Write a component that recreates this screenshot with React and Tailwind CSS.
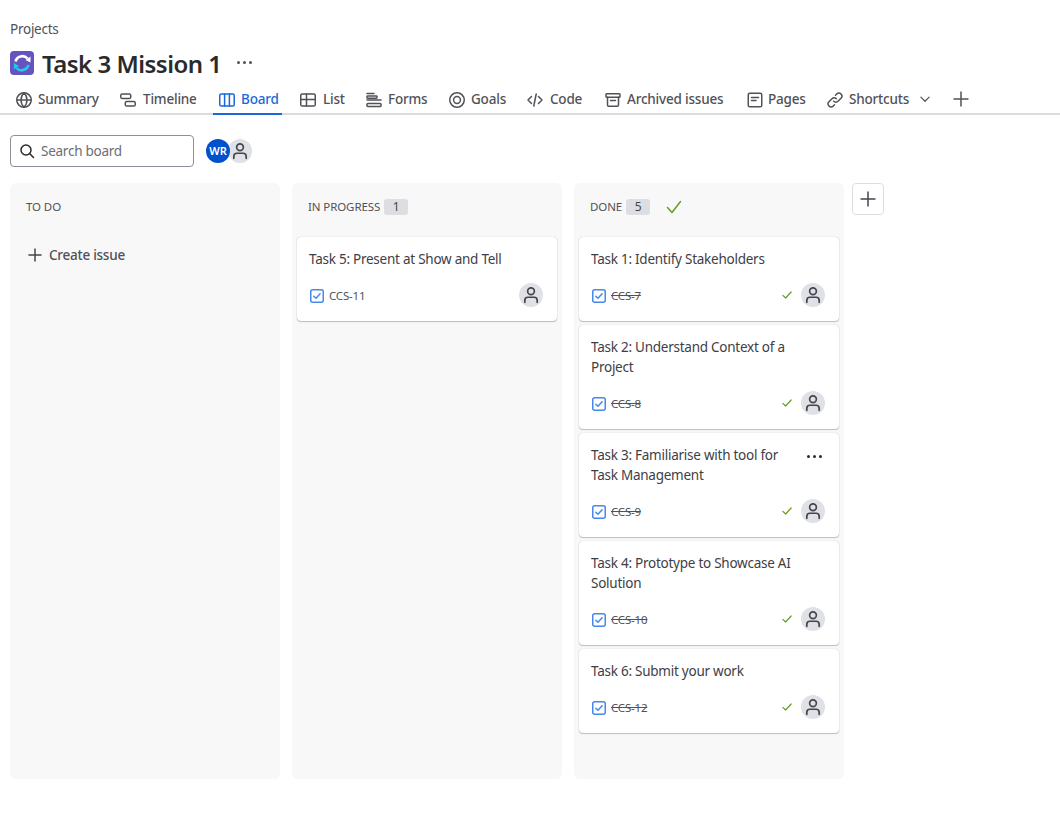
import React from 'react';

const Ico = ({ children, className = 'w-4 h-4' }) => (
  <svg viewBox="0 0 16 16" fill="none" stroke="currentColor" strokeWidth="1.5" strokeLinecap="round" strokeLinejoin="round" className={`${className} shrink-0`}>
    {children}
  </svg>
);

const GlobeIcon = () => (
  <Ico>
    <circle cx="8" cy="8" r="7.25" />
    <path d="M.75 8h14.5M8 .75C5.8 3 5 5.5 5 8s.8 5 3 7.25C10.2 13 11 10.5 11 8s-.8-5-3-7.25Z" />
  </Ico>
);
const TimelineIcon = () => (
  <Ico>
    <rect x=".75" y="2" width="10" height="4.5" rx="1.6" />
    <rect x="5.25" y="9.5" width="10" height="4.5" rx="1.6" />
  </Ico>
);
const BoardIcon = () => (
  <Ico>
    <rect x=".75" y="2" width="14.5" height="12" rx="1.6" />
    <path d="M5.6 2v12M10.4 2v12" />
  </Ico>
);
const ListIcon = () => (
  <Ico>
    <rect x=".75" y="2" width="14.5" height="12" rx="1.6" />
    <path d="M.75 7.5h14.5M6.5 2v12" />
  </Ico>
);
const FormsIcon = () => (
  <Ico>
    <path d="M1 1.5h7M1 8h14" />
    <rect x="1" y="4" width="10" height="2.2" rx=".6" />
    <rect x="1" y="11.5" width="14" height="3" rx=".8" />
  </Ico>
);
const GoalsIcon = () => (
  <Ico>
    <circle cx="8" cy="8" r="7.25" />
    <circle cx="8" cy="8" r="3.4" />
  </Ico>
);
const CodeIcon = () => (
  <Ico className="w-[18px] h-4">
    <path d="M4.5 4.5 1 8l3.5 3.5M11.5 4.5 15 8l-3.5 3.5M9.2 2 6.8 14" />
  </Ico>
);
const ArchiveIcon = () => (
  <Ico>
    <rect x="1" y="1.75" width="14" height="3.5" rx=".8" />
    <path d="M2.5 5.25V13c0 .7.5 1.25 1.2 1.25h8.6c.7 0 1.2-.55 1.2-1.25V5.25M5.5 8.5h5" />
  </Ico>
);
const PagesIcon = () => (
  <Ico>
    <rect x="1.25" y="1.25" width="13.5" height="13.5" rx="1.6" />
    <path d="M4.5 5.5h7M4.5 8.5h4.5" />
  </Ico>
);
const LinkIcon = () => (
  <Ico>
    <path d="M6.7 9.3a3 3 0 0 0 4.3 0l3-3a3 3 0 0 0-4.3-4.3l-1.2 1.2" />
    <path d="M9.3 6.7a3 3 0 0 0-4.3 0l-3 3A3 3 0 0 0 6.3 14l1.2-1.2" />
  </Ico>
);

const tabs = [
  { label: 'Summary', icon: GlobeIcon, text: 'w-[61px]', gap: 'ml-0', inner: 'gap-1.5' },
  { label: 'Timeline', icon: TimelineIcon, text: 'w-[54px]', gap: 'ml-[15px]', inner: 'gap-[7px]' },
  { label: 'Board', icon: BoardIcon, text: 'w-[37px]', gap: 'ml-4', inner: 'gap-1.5', active: true },
  { label: 'List', icon: ListIcon, text: 'w-[21px]', gap: 'ml-3', inner: 'gap-[7px]' },
  { label: 'Forms', icon: FormsIcon, text: 'w-[39px]', gap: 'ml-4', inner: 'gap-1.5' },
  { label: 'Goals', icon: GoalsIcon, text: 'w-[35px]', gap: 'ml-4', inner: 'gap-1.5' },
  { label: 'Code', icon: CodeIcon, text: 'w-[33px]', gap: 'ml-[14px]', inner: 'gap-1.5' },
  { label: 'Archived issues', icon: ArchiveIcon, text: 'w-[97px]', gap: 'ml-4', inner: 'gap-1.5' },
  { label: 'Pages', icon: PagesIcon, text: 'w-[37px]', gap: 'ml-[17px]', inner: 'gap-[5px]' },
  { label: 'Shortcuts', icon: LinkIcon, text: 'w-[61px]', gap: 'ml-4', inner: 'gap-1.5' },
];

const PersonAvatar = ({ className = '' }) => (
  <div className={`w-6 h-6 rounded-full bg-[#dfe1e6] flex items-center justify-center text-[#44464c] ${className}`}>
    <svg viewBox="0 0 16 16" fill="none" stroke="currentColor" strokeWidth="1.5" className="w-[18px] h-[18px]">
      <circle cx="8" cy="4.6" r="3" />
      <path d="M2.5 14.5v-1.6c0-1.6 1.2-2.9 2.8-2.9h5.4c1.6 0 2.8 1.3 2.8 2.9v1.6" strokeLinecap="round" />
    </svg>
  </div>
);

const TaskIcon = () => (
  <svg viewBox="0 0 16 16" fill="none" className="w-4 h-4 shrink-0 mt-0.5">
    <rect x="1.75" y="1.75" width="12.5" height="12.5" rx="2" stroke="#4688ec" strokeWidth="1.5" />
    <path d="M4.8 8.2 7 10.3 11.1 5.7" stroke="#4688ec" strokeWidth="1.5" strokeLinecap="round" strokeLinejoin="round" />
  </svg>
);

const Card = ({ title, code, done, menu }) => (
  <div className="bg-white rounded-[4px] shadow-[0_1px_1px_rgba(30,31,33,0.25),0_0_1px_rgba(30,31,33,0.31)] pt-3 pl-3 pr-3.5 pb-3.5">
    <div className="flex justify-between">
      <p className="text-[13.5px] tracking-[-0.25px] leading-5 text-[#3e4046] w-[212px]">{title}</p>
      {menu && (
        <div className="flex gap-[3px] mt-[10px] mr-[3px] h-[3px]">
          <span className="w-[3px] h-[3px] rounded-full bg-[#292a2e]" />
          <span className="w-[3px] h-[3px] rounded-full bg-[#292a2e]" />
          <span className="w-[3px] h-[3px] rounded-full bg-[#292a2e]" />
        </div>
      )}
    </div>
    <div className="flex items-center mt-3.5 h-6">
      <TaskIcon />
      <span className={`ml-1 mt-px text-[11.5px] tracking-[-0.2px] text-[#505258] ${done ? 'line-through' : ''}`}>{code}</span>
      <div className="ml-auto flex items-center">
        {done && (
          <svg viewBox="0 0 16 16" fill="none" className="w-3 h-3 mr-2">
            <path d="M2.5 8.5 6.2 12l7.3-8" stroke="#6a9a23" strokeWidth="1.6" strokeLinecap="round" strokeLinejoin="round" />
          </svg>
        )}
        <PersonAvatar />
      </div>
    </div>
  </div>
);

const Column = ({ name, count, done, children }) => (
  <div className="w-[270px] h-[596px] bg-[#f8f8f8] rounded-md px-[5px] shrink-0">
    <div className="h-[54px] flex items-center pl-[11px] pb-[6px] text-[11.5px] tracking-[-0.1px] text-[#505258]">
      <span>{name}</span>
      {count && (
        <span className="ml-1 w-6 h-4 rounded-[3px] bg-[#dddee1] flex items-center justify-center text-[12px] text-[#44464c]">{count}</span>
      )}
      {done && (
        <svg viewBox="0 0 16 16" fill="none" className="w-4 h-4 ml-4">
          <path d="M1.5 8.5 6 13.5l8.5-11" stroke="#6a9a23" strokeWidth="1.5" strokeLinecap="round" strokeLinejoin="round" />
        </svg>
      )}
    </div>
    <div className="flex flex-col gap-1">{children}</div>
  </div>
);

const App = () => {
  return (
    <div className="w-[1060px] h-[833px] bg-white overflow-hidden font-['Noto_Sans',sans-serif]">
      <div className="pl-2.5 pt-[19px]">
        <p className="text-[13.5px] tracking-[-0.25px] leading-5 text-[#505258]">Projects</p>
        <div className="flex items-center mt-[12px] h-6">
          <svg viewBox="0 0 24 24" className="w-6 h-6 shrink-0">
            <rect width="24" height="24" rx="4" fill="#6554c0" />
            <path d="M5.5 10.5a7 7 0 0 1 12-3" fill="none" stroke="#fff" strokeWidth="2.6" />
            <path d="M20.5 5.5v6l-5-2.5z" fill="#fff" />
            <path d="M18.5 14a7 7 0 0 1-12 3" fill="none" stroke="#29c6e8" strokeWidth="2.6" />
            <path d="M3.8 18.5v-6.5l5.2 3z" fill="#29c6e8" />
          </svg>
          <h1 className="ml-2 mt-0.5 text-[24px] tracking-[-0.5px] leading-7 font-semibold text-[#292a2e]">Task 3 Mission 1</h1>
          <div className="ml-[15px] flex gap-[3px] mb-0.5">
            <span className="w-[3px] h-[3px] rounded-full bg-[#505258]" />
            <span className="w-[3px] h-[3px] rounded-full bg-[#505258]" />
            <span className="w-[3px] h-[3px] rounded-full bg-[#505258]" />
          </div>
        </div>
      </div>

      {/* Tabs */}
      <div className="mt-[11px] h-[29px] border-b-2 border-[#dcdcdc] flex items-start text-[#505258] pl-2.5">
        {tabs.map((tab) => {
          const Icon = tab.icon;
          return (
            <div
              key={tab.label}
              className={`h-[29px] flex items-center pl-1.5 ${tab.inner} ${tab.gap} ${tab.active ? 'text-[#1868db] border-b-2 border-[#1868db] pr-1' : 'pb-0.5'}`}
            >
              <Icon />
              <span className={`text-[13.5px] tracking-[-0.2px] font-medium whitespace-nowrap ${tab.text}`}>{tab.label}</span>
            </div>
          );
        })}
        <svg viewBox="0 0 16 16" fill="none" className="w-3 h-3 ml-[9px] mt-[7px] shrink-0">
          <path d="M2.5 5.5 8 11l5.5-5.5" stroke="currentColor" strokeWidth="1.6" strokeLinecap="round" strokeLinejoin="round" />
        </svg>
        <svg viewBox="0 0 16 16" fill="none" className="w-4 h-4 ml-[22px] mt-[5px] shrink-0">
          <path d="M8 .5v15M.5 8h15" stroke="currentColor" strokeWidth="1.5" />
        </svg>
      </div>

      {/* Filters */}
      <div className="flex items-center pl-2.5 mt-5">
        <div className="w-[184px] h-8 border border-[#8c8f97] rounded-[4px] flex items-center pl-2">
          <svg viewBox="0 0 16 16" fill="none" className="w-4 h-4 text-[#292a2e]">
            <circle cx="7" cy="7" r="5" stroke="currentColor" strokeWidth="1.5" />
            <path d="m10.8 10.8 3.7 3.7" stroke="currentColor" strokeWidth="1.5" strokeLinecap="round" />
          </svg>
          <span className="ml-1.5 text-[13.5px] tracking-[-0.25px] text-[#6b6e76]">Search board</span>
        </div>
        <div className="flex ml-3">
          <div className="w-6 h-6 rounded-full bg-[#0052cc] text-white text-[11px] font-semibold flex items-center justify-center relative z-10">WR</div>
          <PersonAvatar className="-ml-0.5" />
        </div>
      </div>

      {/* Board */}
      <div className="flex gap-3 pl-2.5 mt-4">
        <Column name="TO DO">
          <div className="flex items-center pl-[13px] mt-1.5 h-6 text-[#505258]">
            <svg viewBox="0 0 16 16" fill="none" className="w-3.5 h-3.5">
              <path d="M8 .5v15M.5 8h15" stroke="#44464c" strokeWidth="1.7" />
            </svg>
            <span className="ml-[7px] text-[13.5px] tracking-[-0.25px] font-medium">Create issue</span>
          </div>
        </Column>
        <Column name="IN PROGRESS" count="1">
          <Card title="Task 5: Present at Show and Tell" code="CCS-11" />
        </Column>
        <Column name="DONE" count="5" done>
          <Card title="Task 1: Identify Stakeholders" code="CCS-7" done />
          <Card title="Task 2: Understand Context of a Project" code="CCS-8" done />
          <Card title="Task 3: Familiarise with tool for Task Management" code="CCS-9" done menu />
          <Card title="Task 4: Prototype to Showcase AI Solution" code="CCS-10" done />
          <Card title="Task 6: Submit your work" code="CCS-12" done />
        </Column>
        <div className="-ml-1 w-8 h-8 rounded-[4px] border border-[#dddee1] flex items-center justify-center shrink-0">
          <svg viewBox="0 0 16 16" fill="none" className="w-4 h-4">
            <path d="M8 .5v15M.5 8h15" stroke="#44464c" strokeWidth="1.5" />
          </svg>
        </div>
      </div>
    </div>
  );
};

export default App;
